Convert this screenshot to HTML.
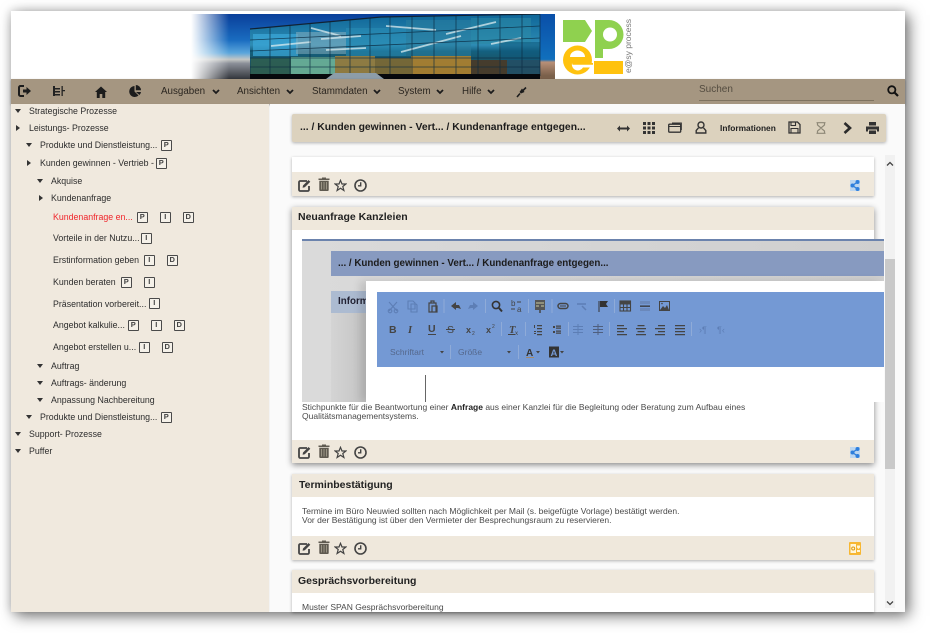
<!DOCTYPE html>
<html lang="de"><head><meta charset="utf-8"><title>e@sy process</title>
<style>
html,body{margin:0;padding:0;background:#fff;width:934px;height:633px;overflow:hidden}
body{position:relative;font-family:"Liberation Sans",sans-serif;color:#333;filter:blur(.3px)}
div,span,svg{position:absolute;box-sizing:border-box}
.t{white-space:nowrap;line-height:12px}
#f{left:11px;top:11px;width:894px;height:601px;background:#fff;box-shadow:4px 4px 14px rgba(0,0,0,.55),-1px -1px 8px rgba(0,0,0,.12)}
.n{font-size:9.8px;color:#2b2620;top:86px}
.s{font-size:8.8px;color:#2d2d2d;line-height:12px;white-space:nowrap}
.b{width:10.500px;height:10.500px;border:1.500px solid #4a4a4a;font:bold 7.500px/7.500px "Liberation Sans",sans-serif;text-align:center;color:#444;background:#f5f1e9;border-radius:1px}
.a{width:0;height:0}
.d{border-left:3.500px solid transparent;border-right:3.500px solid transparent;border-top:4px solid #333}
.r{border-top:3.500px solid transparent;border-bottom:3.500px solid transparent;border-left:4px solid #333}
.h{left:292px;width:582px;background:#efe8dc;box-shadow:0 1px 3px rgba(0,0,0,.3)}
.ti{font:bold 10.500px/12px "Liberation Sans",sans-serif;color:#222;white-space:nowrap}
.tx{font-size:8.500px;line-height:9px;color:#4a4a4a;white-space:nowrap}
</style></head><body>
<svg width="0" height="0" style="left:0;top:0"><defs>
<symbol id="edit" viewBox="0 0 13 13"><path d="M9 2H2.200A1.200 1.200 0 0 0 1 3.200v7.600A1.200 1.200 0 0 0 2.200 12h7.600A1.200 1.200 0 0 0 11 10.800V7" fill="none" stroke="#444" stroke-width="1.800"/><path d="M5 6.500 10.500 1l1.800 1.700L6.800 8.300 4.600 8.800z" fill="#444"/></symbol>
<symbol id="trash" viewBox="0 0 12 14"><path d="M4 1.500V.5h4v1h3.500V3H.5V1.500zM1.300 3.800h9.400V13a1 1 0 0 1-1 1H2.300a1 1 0 0 1-1-1z" fill="#5f5a50"/><path d="M3.500 5v7.500M6 5v7.500M8.500 5v7.500" stroke="#b3ad9c" stroke-width=".7"/></symbol>
<symbol id="star" viewBox="0 0 13 13"><path d="M6.500 1.300 8 5h3.900L8.800 7.500l1.100 4-3.400-2.300-3.400 2.300 1.100-4L1.100 5H5z" fill="none" stroke="#444" stroke-width="1.200"/></symbol>
<symbol id="clock" viewBox="0 0 13 13"><circle cx="6.500" cy="6.500" r="5.500" fill="none" stroke="#444" stroke-width="1.600"/><path d="M6.700 3.200v3.600H4" fill="none" stroke="#444" stroke-width="1.400"/></symbol>
<symbol id="share" viewBox="0 0 10 13"><path d="M0 1h10v11H0z" fill="#bcd6f0"/><circle cx="2.500" cy="6.500" r="2" fill="#2f7fdc"/><circle cx="7.500" cy="3" r="2" fill="#2f7fdc"/><circle cx="7.500" cy="10" r="2" fill="#2f7fdc"/><path d="M2.500 6.500 7.500 3M2.500 6.500 7.500 10" stroke="#2f7fdc" stroke-width="1.300"/></symbol>
</defs></svg>

<div id="f"></div>

<!-- banner -->
<svg style="left:191px;top:14px;" width="364" height="65" viewBox="0 0 364 65">
<defs>
<linearGradient id="sky" x1="0" y1="0" x2="0" y2="1"><stop offset="0" stop-color="#0a3f9a"/><stop offset=".4" stop-color="#1a6cc0"/><stop offset=".6" stop-color="#5ba6dc"/><stop offset=".7" stop-color="#c4c6c4"/><stop offset=".76" stop-color="#8b8f98"/><stop offset="1" stop-color="#33363c"/></linearGradient>
<linearGradient id="fade" x1="0" y1="0" x2="1" y2="0"><stop offset="0" stop-color="#fff"/><stop offset=".06" stop-color="#fff" stop-opacity=".85"/><stop offset=".38" stop-color="#fff" stop-opacity="0"/></linearGradient>
<linearGradient id="gl" x1="0" y1="0" x2="0" y2="1"><stop offset="0" stop-color="#0f6698"/><stop offset=".5" stop-color="#2e8cb4"/><stop offset=".6" stop-color="#146080"/><stop offset="1" stop-color="#23443f"/></linearGradient>
<linearGradient id="rgt" x1="0" y1="0" x2="0" y2="1"><stop offset="0" stop-color="#0a4fa8"/><stop offset=".7" stop-color="#1170bd"/><stop offset=".74" stop-color="#b89078"/><stop offset=".95" stop-color="#7a604a"/></linearGradient>
</defs>
<rect width="364" height="65" fill="url(#sky)"/>
<rect x="349" width="15" height="65" fill="url(#rgt)"/>
<path d="M0 0h100v65H0z" fill="url(#fade)"/>
<path d="M59 15 190 3 349 0V62H59z" fill="url(#gl)"/>
<g opacity=".9">
<path d="M62 20h45v22H62z" fill="#3ba7d8" opacity=".8"/>
<path d="M105 18h50v22h-50z" fill="#8fb3c0" opacity=".55"/>
<path d="M155 14h60v28h-60z" fill="#2a8db5" opacity=".6"/>
<path d="M215 6h65v36h-65z" fill="#2c7f9e" opacity=".6"/>
<path d="M280 4h60v26h-60z" fill="#2d8aa5" opacity=".6"/>
<path d="M310 28h39v24h-39z" fill="#0f587c" opacity=".6"/>
<path d="M60 44h40v16H60z" fill="#2e5f52"/>
<path d="M100 43h44v17h-44z" fill="#6cb39a"/>
<path d="M144 42h40v18h-40z" fill="#9a8040"/>
<path d="M184 44h36v16h-36z" fill="#7e6a34"/>
<path d="M220 42h60v18h-60z" fill="#b0822e"/>
<path d="M280 46h36v14h-36z" fill="#4a3a28"/>
<path d="M316 46h33v14h-33z" fill="#234f66"/>
</g>
<path d="M130 25l40-3M195 12l50 4M255 20l50-12M210 38l60-16M80 32l40-4M120 14l30 8M300 30l30-6M135 36l40-2" stroke="#dcecef" stroke-width="1.800" opacity=".75"/>
<g stroke="#0a2a40" stroke-width=".8" opacity=".8"><path d="M79 13V62M99 11V62M119 9V62M139 8V62M159 6V62M179 4V62M199 3V62M221 3V62M243 2V62M265 2V62M287 1V62M309 1V62M331 0V62M349 0V62"/><path d="M59 26 349 12M59 37 349 24M59 44H349M59 53H349"/></g>
<path d="M59 15 190 3 349 0" fill="none" stroke="#123" stroke-width="1.200"/>
<path d="M59 60H349V65H59z" fill="#07090d"/>
<path d="M135 65l8-6h42l8 6z" fill="#8d9da8"/>
</svg>

<!-- logo -->
<svg style="left:560px;top:17px" width="76" height="60" viewBox="0 0 76 60">
<path d="M3 3H25L32 14 25 25H3z" fill="#8fd14f"/>
<path d="M35 3H49A14.500 14.500 0 0 1 49 32H43V41H35z" fill="#8fd14f"/><circle cx="50" cy="17.500" r="7" fill="#fff"/>
<path d="M34 44H63V57H34z" fill="#ffc20e"/>
<circle cx="17.500" cy="43" r="14.500" fill="#ffc20e"/>
<path d="M10 40a7.500 6.500 0 0 1 15 0z" fill="#fff"/>
<path d="M33 46H12a6 6 0 0 0 11 4.500H33z" fill="#fff"/>
<path d="M12 46h21v1.800H12.500z" fill="#ffc20e"/>
<text transform="translate(71,56) rotate(-90)" font-family="Liberation Sans" font-size="8.500" fill="#777">e@sy process</text>
</svg>

<!-- nav -->
<div style="left:11px;top:79px;width:894px;height:25px;background:#a59681;box-shadow:0 1px 2px rgba(0,0,0,.35)"></div>
<svg style="left:18px;top:85px" width="13" height="12" viewBox="0 0 13 12"><path d="M6 1H2.500A1.500 1.500 0 0 0 1 2.500v7A1.500 1.500 0 0 0 2.500 11H6" fill="none" stroke="#1c1c1c" stroke-width="2"/><path d="M5 4.500h3.500V2L13 6 8.500 10V7.500H5z" fill="#1c1c1c"/></svg>
<svg style="left:52px;top:85px" width="13" height="12" viewBox="0 0 13 12"><path d="M1 1h2v10H1zM3 3h5v1.500H3zM3 6h5v1.500H3zM3 9h5v1.500H3zM9.500 5h3.500v1.300H9.500zM9.500 1h1.300v10H9.500z" fill="#222"/></svg>
<svg style="left:95px;top:86px" width="12" height="12" viewBox="0 0 12 12"><path d="M6 .5 12 6h-1.800v6H7.300V8H4.700v4H1.800V6H0z" fill="#1c1c1c"/></svg>
<svg style="left:129px;top:85px" width="12" height="12" viewBox="0 0 12 12"><path d="M5.500 1v5.500L9.500 10.500A5.500 5.500 0 1 1 5.500 1z" fill="#1c1c1c"/><path d="M6.800 0A5.300 5.300 0 0 1 12 5.300H6.800z" fill="#1c1c1c"/><path d="M7 7h5a5.500 5.500 0 0 1-1.500 3z" fill="#1c1c1c"/></svg>
<span class="t n" style="left:161px">Ausgaben</span>
<svg style="left:212px;top:89px" width="8" height="6" viewBox="0 0 8 6"><path d="M1 1l3 3 3-3" fill="none" stroke="#1c1c1c" stroke-width="1.800"/></svg>
<span class="t n" style="left:237px">Ansichten</span>
<svg style="left:286px;top:89px" width="8" height="6" viewBox="0 0 8 6"><path d="M1 1l3 3 3-3" fill="none" stroke="#1c1c1c" stroke-width="1.800"/></svg>
<span class="t n" style="left:312px">Stammdaten</span>
<svg style="left:373px;top:89px" width="8" height="6" viewBox="0 0 8 6"><path d="M1 1l3 3 3-3" fill="none" stroke="#1c1c1c" stroke-width="1.800"/></svg>
<span class="t n" style="left:398px">System</span>
<svg style="left:436px;top:89px" width="8" height="6" viewBox="0 0 8 6"><path d="M1 1l3 3 3-3" fill="none" stroke="#1c1c1c" stroke-width="1.800"/></svg>
<span class="t n" style="left:462px">Hilfe</span>
<svg style="left:487px;top:89px" width="8" height="6" viewBox="0 0 8 6"><path d="M1 1l3 3 3-3" fill="none" stroke="#1c1c1c" stroke-width="1.800"/></svg>
<svg style="left:516px;top:86px" width="11" height="12" viewBox="0 0 11 12"><path d="M10 1.500 7 4.500M4 7.500 1 11" stroke="#1c1c1c" stroke-width="1.600"/><path d="M6 2.500 8.500 6 5 7.500 3.500 6z" fill="#1c1c1c"/></svg>
<span class="t" style="left:699px;top:84px;font-size:10px;color:#544c40">Suchen</span>
<div style="left:699px;top:100px;width:175px;height:1px;background:#7e725f"></div>
<svg style="left:887px;top:85px" width="12" height="12" viewBox="0 0 12 12"><circle cx="4.800" cy="4.800" r="3.600" fill="none" stroke="#111" stroke-width="1.800"/><path d="M7.500 7.500 11 11" stroke="#111" stroke-width="2.200"/></svg>

<!-- sidebar -->
<div style="left:11px;top:104px;width:258px;height:508px;background:#f0e9de;box-shadow:1px 0 1px rgba(0,0,0,.06)"></div>
<div class="a d" style="left:15px;top:109px"></div><span class="s" style="left:29px;top:105px">Strategische Prozesse</span>
<div class="a r" style="left:16px;top:125px"></div><span class="s" style="left:29px;top:122px">Leistungs- Prozesse</span>
<div class="a d" style="left:26px;top:143px"></div><span class="s" style="left:40px;top:139px">Produkte und Dienstleistung...</span><div class="b" style="left:161px;top:140px">P</div>
<div class="a r" style="left:27px;top:160px"></div><span class="s" style="left:40px;top:157px">Kunden gewinnen - Vertrieb -</span><div class="b" style="left:156px;top:158px">P</div>
<div class="a d" style="left:37px;top:179px"></div><span class="s" style="left:51px;top:175px">Akquise</span>
<div class="a r" style="left:39px;top:195px"></div><span class="s" style="left:51px;top:192px">Kundenanfrage</span>
<span class="s" style="left:53px;top:211px;color:#f0262c">Kundenanfrage en...</span><div class="b" style="left:137px;top:212px">P</div><div class="b" style="left:160px;top:212px">I</div><div class="b" style="left:183px;top:212px">D</div>
<span class="s" style="left:53px;top:232px">Vorteile in der Nutzu...</span><div class="b" style="left:141px;top:233px">I</div>
<span class="s" style="left:53px;top:254px">Erstinformation geben</span><div class="b" style="left:144px;top:255px">I</div><div class="b" style="left:167px;top:255px">D</div>
<span class="s" style="left:53px;top:276px">Kunden beraten</span><div class="b" style="left:121px;top:277px">P</div><div class="b" style="left:144px;top:277px">I</div>
<span class="s" style="left:53px;top:298px">Präsentation vorbereit...</span><div class="b" style="left:149px;top:298px">I</div>
<span class="s" style="left:53px;top:319px">Angebot kalkulie...</span><div class="b" style="left:128px;top:320px">P</div><div class="b" style="left:151px;top:320px">I</div><div class="b" style="left:174px;top:320px">D</div>
<span class="s" style="left:53px;top:341px">Angebot erstellen u...</span><div class="b" style="left:139px;top:342px">I</div><div class="b" style="left:162px;top:342px">D</div>
<div class="a d" style="left:37px;top:364px"></div><span class="s" style="left:51px;top:360px">Auftrag</span>
<div class="a d" style="left:37px;top:381px"></div><span class="s" style="left:51px;top:377px">Auftrags- änderung</span>
<div class="a d" style="left:37px;top:398px"></div><span class="s" style="left:51px;top:394px">Anpassung Nachbereitung</span>
<div class="a d" style="left:26px;top:415px"></div><span class="s" style="left:40px;top:411px">Produkte und Dienstleistung...</span><div class="b" style="left:161px;top:412px">P</div>
<div class="a d" style="left:15px;top:432px"></div><span class="s" style="left:29px;top:428px">Support- Prozesse</span>
<div class="a d" style="left:15px;top:449px"></div><span class="s" style="left:29px;top:445px">Puffer</span>

<!-- content background -->
<div style="left:270px;top:104px;width:635px;height:508px;background:#fafafa"></div>

<!-- top bar -->
<div style="left:292px;top:114px;width:594px;height:28px;background:#dcd2be;border-radius:2px;box-shadow:0 1px 3px rgba(0,0,0,.3)"></div>
<span class="t" style="left:300px;top:122px;font-size:10.350px;font-weight:bold;color:#1c1c1c">... / Kunden gewinnen - Vert... / Kundenanfrage entgegen...</span>
<svg style="left:617px;top:125px" width="13" height="7" viewBox="0 0 13 7"><path d="M0 3.500 3 .5v2h7v-2l3 3-3 3v-2H3v2z" fill="#333"/></svg>
<svg style="left:643px;top:122px" width="12" height="12" viewBox="0 0 12 12" fill="#333"><path d="M0 0h3v3H0zM4.500 0h3v3h-3zM9 0h3v3H9zM0 4.500h3v3H0zM4.500 4.500h3v3h-3zM9 4.500h3v3H9zM0 9h3v3H0zM4.500 9h3v3h-3zM9 9h3v3H9z"/></svg>
<svg style="left:668px;top:122px" width="14" height="11" viewBox="0 0 14 11"><rect x=".7" y="2.200" width="12" height="8" rx="1" fill="none" stroke="#333" stroke-width="1.300"/><path d="M.7 4.500h12M4 1h9.300v7" fill="none" stroke="#333" stroke-width="1.100"/></svg>
<svg style="left:695px;top:121px" width="12" height="13" viewBox="0 0 12 13"><circle cx="6" cy="4" r="3" fill="none" stroke="#333" stroke-width="1.400"/><path d="M3.500 6.800 1.200 9.500V12h9.600V9.500L8.500 6.800" fill="none" stroke="#333" stroke-width="1.400"/></svg>
<span class="t" style="left:720px;top:122px;font-size:8.400px;font-weight:bold;color:#222">Informationen</span>
<svg style="left:788px;top:121px" width="13" height="13" viewBox="0 0 13 13"><path d="M1 1h8.500L12 3.500V12H1z" fill="none" stroke="#333" stroke-width="1.300"/><path d="M3 1v3.500h4.500V1M3 7.500h7V12H3z" fill="none" stroke="#333" stroke-width="1.100"/></svg>
<svg style="left:816px;top:122px" width="10" height="12" viewBox="0 0 10 12"><path d="M.5.700h9M.5 11.300h9M1.500 1v2L5 6l3.500-3V1M1.500 11V9L5 6l3.500 3v2" fill="none" stroke="#8e8877" stroke-width="1.200"/></svg>
<svg style="left:843px;top:122px" width="9" height="12" viewBox="0 0 9 12"><path d="M1.500 1 7 6 1.500 11" fill="none" stroke="#2b2b2b" stroke-width="2.600"/></svg>
<svg style="left:866px;top:122px" width="13" height="12" viewBox="0 0 13 12"><path d="M3 0h7v3.500H3zM0 4.500h13V9.500h-2V7.500H2v2H0zM3 8.500h7V12H3z" fill="#333"/></svg>

<!-- scrollbar -->
<div style="left:885px;top:155px;width:10px;height:453px;background:#f1f1f1"></div>
<div style="left:885px;top:259px;width:10px;height:210px;background:#c9c9c9"></div>
<svg style="left:886px;top:161px" width="8" height="6" viewBox="0 0 8 6"><path d="M1 4.500 4 1.500l3 3" fill="none" stroke="#444" stroke-width="1.300"/></svg>
<svg style="left:886px;top:600px" width="8" height="6" viewBox="0 0 8 6"><path d="M1 1.500 4 4.500l3-3" fill="none" stroke="#444" stroke-width="1.300"/></svg>

<!-- card 1 -->
<div class="h" style="top:157px;height:39px;background:#fff"></div>
<div style="left:292px;top:172px;width:582px;height:24px;background:#efe8dc"></div>
<svg style="left:298px;top:179px" width="13" height="13"><use href="#edit"/></svg><svg style="left:318px;top:177px" width="12" height="14"><use href="#trash"/></svg><svg style="left:334px;top:179px" width="13" height="13"><use href="#star"/></svg><svg style="left:354px;top:179px" width="13" height="13"><use href="#clock"/></svg>
<svg style="left:850px;top:179px" width="10" height="13"><use href="#share"/></svg>

<!-- card 2 -->
<div class="h" style="top:207px;height:256px;background:#fff;box-shadow:0 2px 6px rgba(0,0,0,.45)"></div>
<div style="left:292px;top:207px;width:582px;height:23px;background:#efe8dc"></div>
<span class="ti" style="left:298px;top:211px">Neuanfrage Kanzleien</span>
<div style="left:292px;top:440px;width:582px;height:23px;background:#efe8dc"></div>
<svg style="left:298px;top:446px" width="13" height="13"><use href="#edit"/></svg><svg style="left:318px;top:444px" width="12" height="14"><use href="#trash"/></svg><svg style="left:334px;top:446px" width="13" height="13"><use href="#star"/></svg><svg style="left:354px;top:446px" width="13" height="13"><use href="#clock"/></svg>
<svg style="left:850px;top:446px" width="10" height="13"><use href="#share"/></svg>

<!-- embedded screenshot -->
<div style="left:302px;top:239px;width:582px;height:163px;background:#d2d2d2;overflow:hidden">
 <div style="left:0;top:0;width:582px;height:2px;background:#6b83ad"></div>
 <div style="left:0;top:2px;width:582px;height:161px;background:linear-gradient(90deg,#dadada,#cfcfcf)"></div>
 <div style="left:29px;top:12px;width:553px;height:25px;background:#879ac0"></div>
 <span class="t" style="left:36px;top:19px;font-size:9.800px;font-weight:bold;color:#1c1c1c">... / Kunden gewinnen - Vert... / Kundenanfrage entgegen...</span>
 <div style="left:29px;top:52px;width:60px;height:111px;background:linear-gradient(90deg,#d4d4d4,#b8b8b8)"></div>
 <div style="left:29px;top:52px;width:60px;height:22px;background:#acbbd1"></div>
 <span class="t" style="left:36px;top:57px;font-size:9.800px;font-weight:bold;color:#223">Inform</span>
 <div style="left:64px;top:42px;width:518px;height:121px;background:#fff;box-shadow:-6px 0 8px rgba(0,0,0,.12)"></div>
</div>
<div style="left:377px;top:292px;width:507px;height:75px;background:#7499d4"></div>
<div style="left:425px;top:375px;width:1px;height:27px;background:#666"></div>

<!-- editor toolbar -->
<svg style="left:377px;top:292px" width="507" height="75" viewBox="377 292 507 75">
<g fill="none" stroke="#5d7eb5" stroke-width="1.100"><path d="M389 302l8 9M397 302l-8 9"/><circle cx="390" cy="311" r="1.800"/><circle cx="396" cy="311" r="1.800"/><path d="M408 301h5l2 2v6h-7zM411 304h5l1 1v7h-6z"/></g>
<g fill="none" stroke="#444" stroke-width="1.200"><path d="M429 303h7v9h-7zM431 303v-2h3v2M432 306h5v6h-5z"/></g>
<path d="M451 306l5-4v3h3l2 4-3-1h-2v2z" fill="#444"/><path d="M478 306l-5-4v3h-3l-2 4 3-1h2v2z" fill="#5d7eb5"/>
<circle cx="496" cy="305" r="3.600" fill="none" stroke="#333" stroke-width="1.600"/><path d="M499 308l3 3.500" stroke="#333" stroke-width="2"/>
<text x="511" y="306" font-family="Liberation Sans" font-size="8" fill="#444">b</text><text x="517" y="312" font-family="Liberation Sans" font-size="8" fill="#444">a</text>
<path d="M517 302h4M511 309h4" stroke="#444" stroke-width="1"/>
<rect x="535" y="300" width="10" height="10" fill="#555"/><path d="M536 303h8M536 306h3M541 306h3" stroke="#c9c9a0" stroke-width="1"/><path d="M540 310v3" stroke="#444" stroke-width="1.500"/>
<rect x="558" y="303.500" width="10" height="5" rx="2.500" fill="none" stroke="#444" stroke-width="1.500"/><path d="M560 306h6" stroke="#444"/>
<path d="M577 304h9M582 306l4 4" stroke="#5d7eb5" stroke-width="1.500" fill="none"/>
<path d="M598.500 301h1v11h-1zM600 301h8l-2 3 2 3h-8z" fill="#333"/>
<g fill="none" stroke="#444" stroke-width="1.100"><rect x="620" y="301" width="10.500" height="10"/><path d="M620 304h10.500M620 307.500h10.500M623.500 304v7M627 304v7"/></g><rect x="620" y="301" width="10.500" height="2.500" fill="#444"/>
<rect x="640" y="305.500" width="10" height="1.300" fill="#333"/><rect x="640" y="301" width="10" height="3" fill="#6a88bb"/><rect x="640" y="308" width="10" height="3" fill="#6a88bb"/>
<rect x="659.500" y="301.500" width="10" height="9" fill="none" stroke="#444"/><path d="M660 310l3-4 2 2 2-3 2 5z" fill="#444"/><circle cx="662" cy="303.500" r=".8" fill="#444"/>
<g fill="#8fabd8"><rect x="443.500" y="299" width="1" height="14"/><rect x="485" y="299" width="1" height="14"/><rect x="528" y="299" width="1" height="14"/><rect x="551.500" y="299" width="1" height="14"/><rect x="614" y="299" width="1" height="14"/>
<rect x="501" y="322" width="1" height="14"/><rect x="525" y="322" width="1" height="14"/><rect x="568" y="322" width="1" height="14"/><rect x="609" y="322" width="1" height="14"/><rect x="691" y="322" width="1" height="14"/><rect x="450" y="345" width="1" height="14"/><rect x="518" y="345" width="1" height="14"/></g>
<text x="389" y="333" font-family="Liberation Sans" font-weight="bold" font-size="10.500" fill="#444">B</text>
<text x="408" y="333" font-family="Liberation Serif" font-style="italic" font-weight="bold" font-size="10.500" fill="#444">I</text>
<text x="428" y="332" font-family="Liberation Sans" font-weight="bold" font-size="10.500" fill="#444">U</text><rect x="428" y="334" width="8" height="1" fill="#444"/>
<text x="447" y="333" font-family="Liberation Sans" font-size="10.500" fill="#444">S</text><rect x="446" y="329" width="9" height="1" fill="#444"/>
<text x="466" y="333" font-family="Liberation Sans" font-weight="bold" font-size="9" fill="#444">x</text><text x="472" y="335" font-family="Liberation Sans" font-size="5" fill="#444">2</text>
<text x="486" y="333" font-family="Liberation Sans" font-weight="bold" font-size="9" fill="#444">x</text><text x="492" y="328" font-family="Liberation Sans" font-size="5" fill="#444">2</text>
<text x="509" y="333" font-family="Liberation Serif" font-style="italic" font-weight="bold" font-size="10.500" fill="#444">T</text><text x="515" y="335" font-family="Liberation Sans" font-size="6" fill="#444">x</text><rect x="508" y="334" width="7" height="1" fill="#444"/>
<g fill="#444"><path d="M534 325h1v3h-1zM534 331h2v1h-2zM534 333h2v1h-2zM537 325h5v1.200h-5zM537 328h5v1.200h-5zM537 331h5v1.200h-5zM537 334h5v1.200h-5z"/>
<path d="M553 326h2v2h-2zM553 331h2v2h-2zM556 325.500h5v1.200h-5zM556 327.500h5v1.200h-5zM556 330.500h5v1.200h-5zM556 332.500h5v1.200h-5z"/></g>
<g fill="#5d7eb5"><path d="M573 326h10v1h-10zM573 329h10v1h-10zM573 332h10v1h-10zM577.500 324h1v11h-1z"/></g>
<g fill="#4f5f7e"><path d="M593 326h10v1h-10zM593 329h10v1h-10zM593 332h10v1h-10zM597.500 324h1v11h-1z"/></g>
<g fill="#444"><path d="M617 325h7v1.200h-7zM617 328h10v1.200h-10zM617 331h7v1.200h-7zM617 334h10v1.200h-10z"/>
<path d="M637.500 325h7v1.200h-7zM636 328h10v1.200h-10zM637.500 331h7v1.200h-7zM636 334h10v1.200h-10z"/>
<path d="M658 325h7v1.200h-7zM655 328h10v1.200h-10zM658 331h7v1.200h-7zM655 334h10v1.200h-10z"/>
<path d="M675 325h10v1.200h-10zM675 328h10v1.200h-10zM675 331h10v1.200h-10zM675 334h10v1.200h-10z"/></g>
<text x="699" y="333" font-family="Liberation Sans" font-size="9" fill="#5d7eb5">›¶</text><text x="717" y="333" font-family="Liberation Sans" font-size="9" fill="#5d7eb5">¶‹</text>
<text x="390" y="355" font-family="Liberation Sans" font-size="8.500" fill="#55688c">Schriftart</text><path d="M440 351h4l-2 2.500z" fill="#444"/>
<text x="458" y="355" font-family="Liberation Sans" font-size="8.500" fill="#55688c">Größe</text><path d="M507 351h4l-2 2.500z" fill="#444"/>
<text x="526" y="356" font-family="Liberation Sans" font-weight="bold" font-size="10" fill="#333">A</text><rect x="526" y="357" width="8" height="1" fill="#a58a6a"/><path d="M536 351h4l-2 2.500z" fill="#444"/>
<rect x="549" y="346.500" width="10" height="11" fill="#333"/><text x="550.500" y="356" font-family="Liberation Sans" font-weight="bold" font-size="9.500" fill="#7499d4">A</text><path d="M560 351h4l-2 2.500z" fill="#444"/>
</svg>

<div class="tx" style="left:302px;top:403px">Stichpunkte für die Beantwortung einer <b style="color:#222">Anfrage</b> aus einer Kanzlei für die Begleitung oder Beratung zum Aufbau eines<br>Qualitätsmanagementsystems.</div>

<!-- card 3 -->
<div class="h" style="top:474px;height:86px;background:#fff"></div>
<div style="left:292px;top:474px;width:582px;height:23px;background:#efe8dc"></div>
<span class="ti" style="left:299px;top:479px">Terminbestätigung</span>
<div class="tx" style="left:302px;top:507px">Termine im Büro Neuwied sollten nach Möglichkeit per Mail (s. beigefügte Vorlage) bestätigt werden.<br>Vor der Bestätigung ist über den Vermieter der Besprechungsraum zu reservieren.</div>
<div style="left:292px;top:536px;width:582px;height:24px;background:#efe8dc"></div>
<svg style="left:298px;top:542px" width="13" height="13"><use href="#edit"/></svg><svg style="left:318px;top:540px" width="12" height="14"><use href="#trash"/></svg><svg style="left:334px;top:542px" width="13" height="13"><use href="#star"/></svg><svg style="left:354px;top:542px" width="13" height="13"><use href="#clock"/></svg>
<svg style="left:849px;top:542px" width="12" height="13" viewBox="0 0 12 13"><rect width="12" height="13" rx="1" fill="#f7b733"/><rect x="1.500" y="2" width="5.500" height="9" fill="#fff5d8"/><path d="M8 3.500h3v2L9.500 7 8 5.500zM8 8h3v2H8z" fill="#fff5d8"/><circle cx="4.200" cy="6.500" r="1.500" fill="none" stroke="#e09a10"/></svg>

<!-- card 4 -->
<div class="h" style="top:570px;height:42px;background:#fff"></div>
<div style="left:292px;top:570px;width:582px;height:23px;background:#efe8dc"></div>
<span class="ti" style="left:298px;top:575px">Gesprächsvorbereitung</span>
<div style="left:292px;top:593px;width:582px;height:19px;overflow:hidden"><div class="tx" style="left:10px;top:10px">Muster SPAN Gesprächsvorbereitung</div></div>
</body></html>
